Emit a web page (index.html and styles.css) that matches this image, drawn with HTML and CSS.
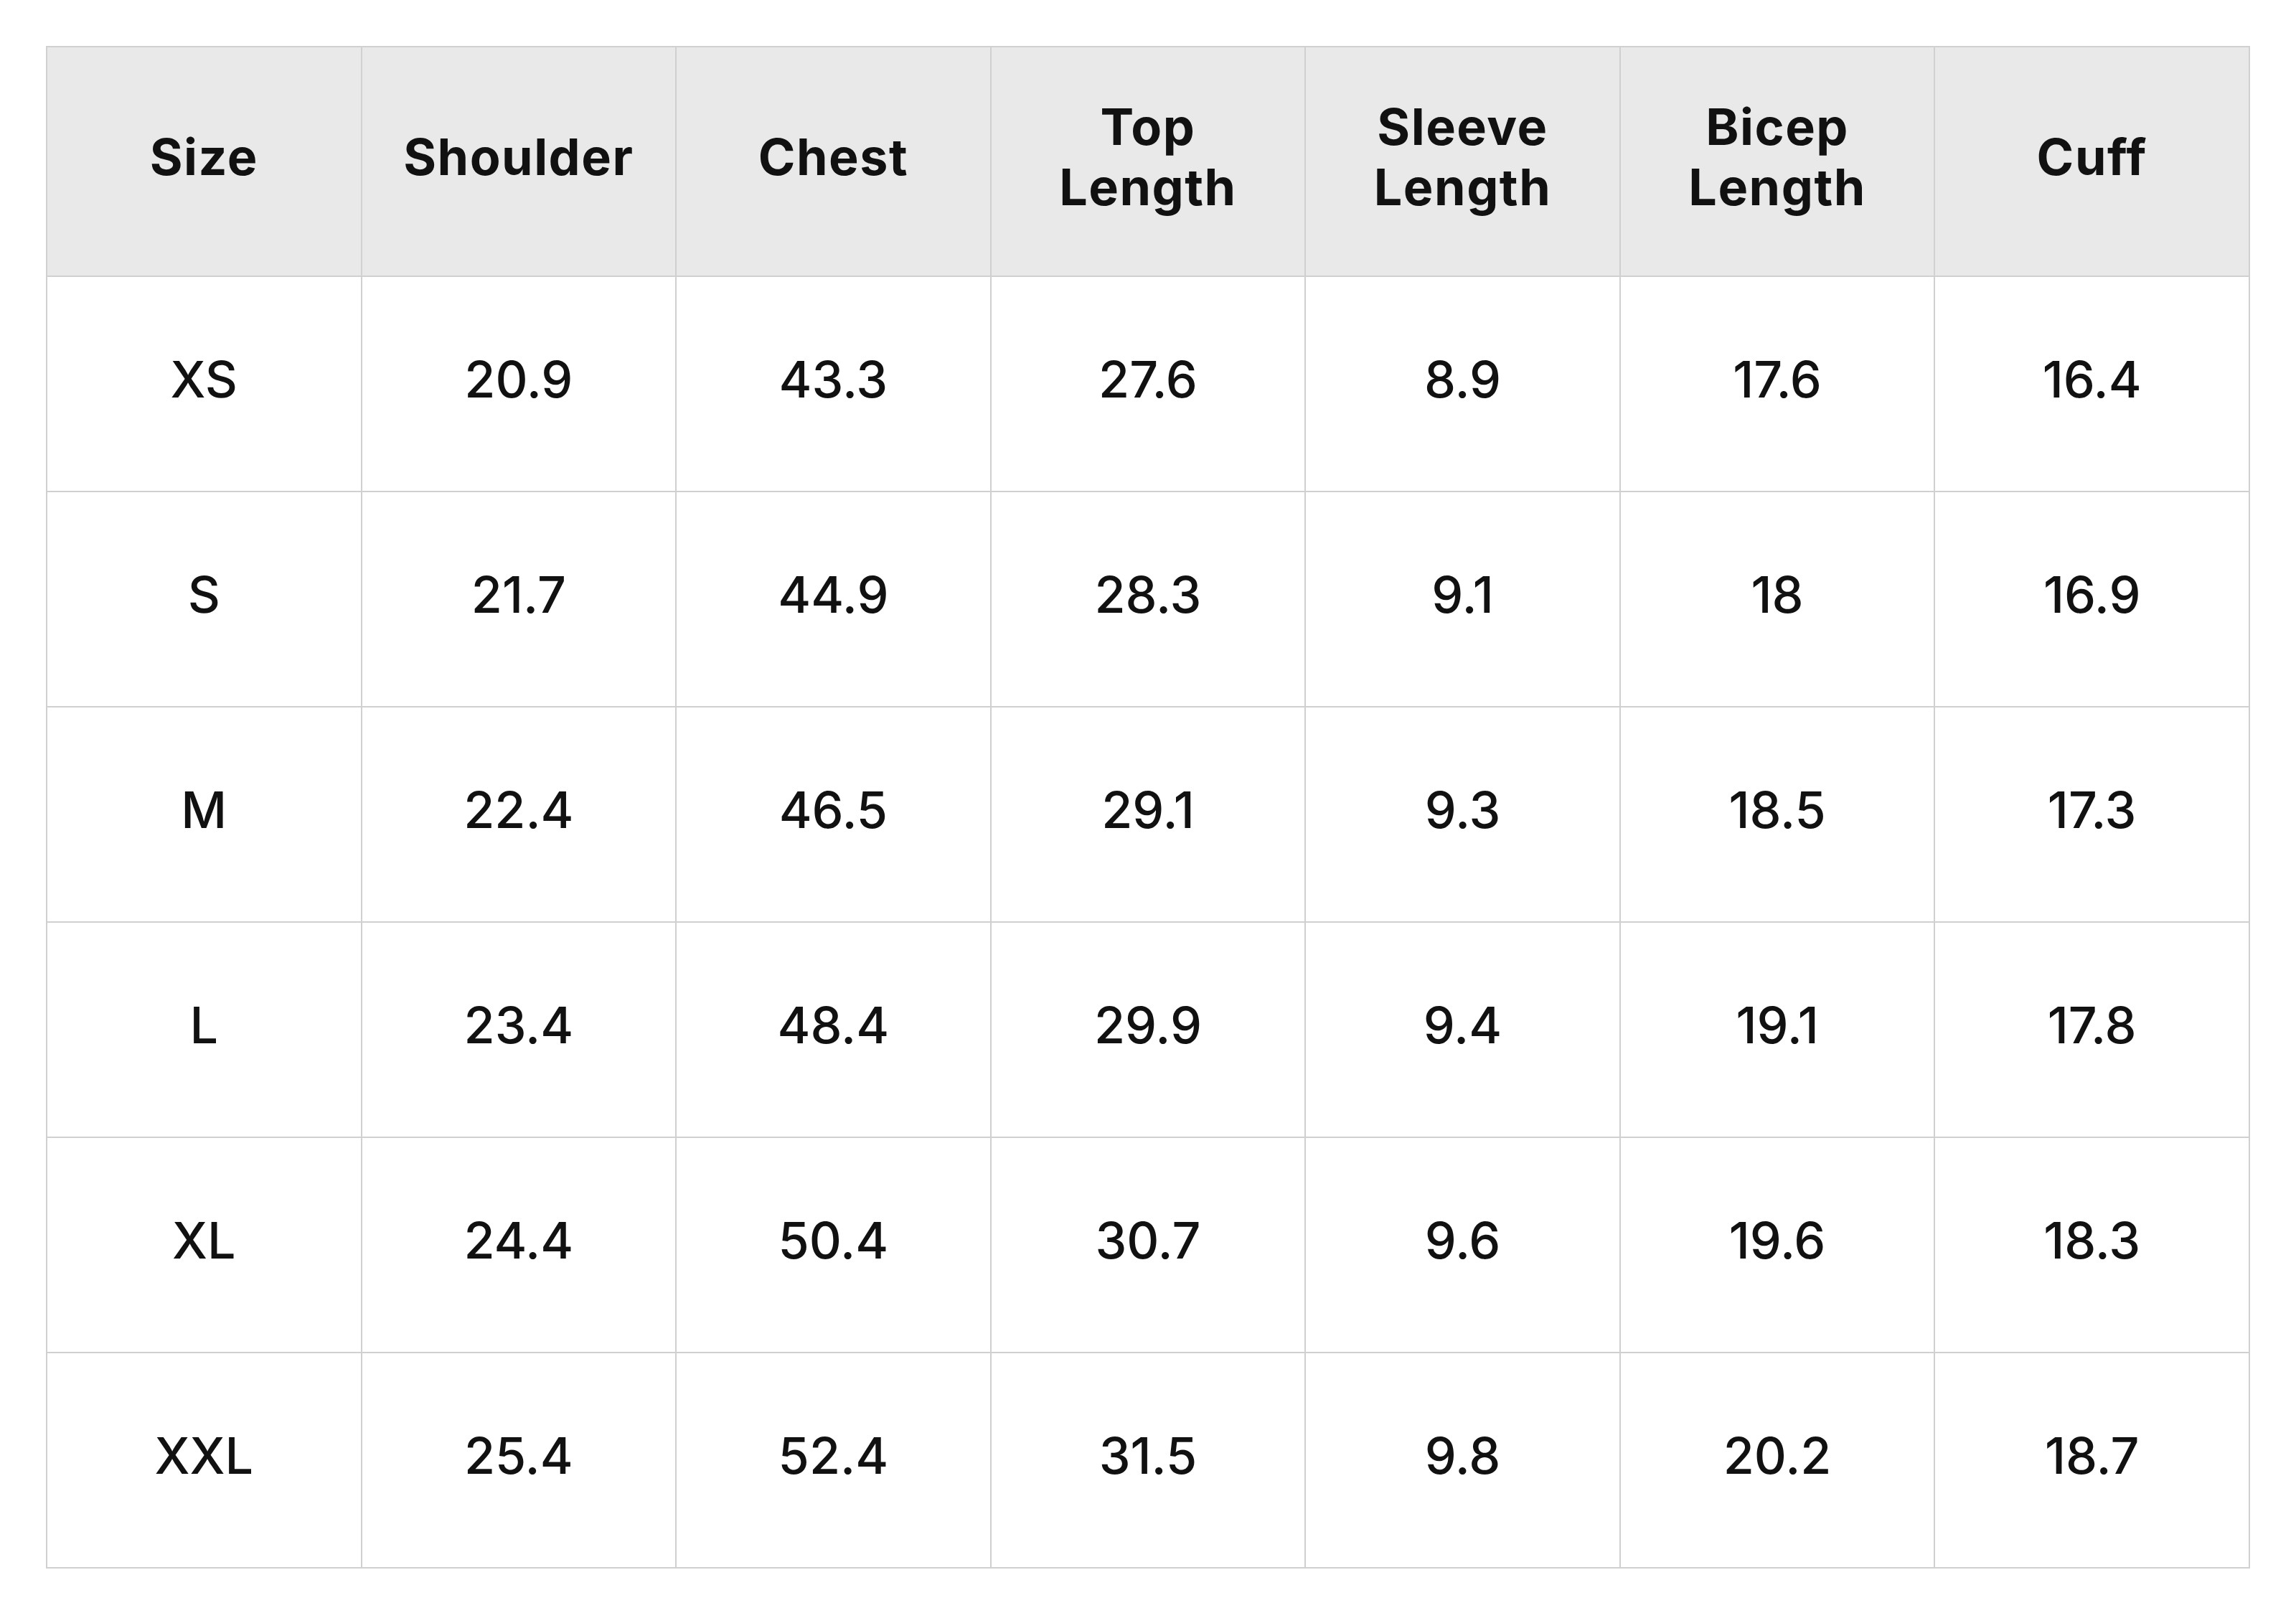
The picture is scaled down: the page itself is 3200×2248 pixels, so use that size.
FILE: index.html
```html
<!DOCTYPE html>
<html lang="en">
<head>
<meta charset="utf-8">
<title>Size Chart</title>
<link rel="stylesheet" href="styles.css">
</head>
<body>
<table class="size-table">
  <thead>
    <tr>
      <th>Size</th>
      <th>Shoulder</th>
      <th>Chest</th>
      <th>Top<br>Length</th>
      <th>Sleeve<br>Length</th>
      <th>Bicep<br>Length</th>
      <th>Cuff</th>
    </tr>
  </thead>
  <tbody>
    <tr><td>XS</td><td>20.9</td><td>43.3</td><td>27.6</td><td>8.9</td><td>17.6</td><td>16.4</td></tr>
    <tr><td>S</td><td>21.7</td><td>44.9</td><td>28.3</td><td>9.1</td><td>18</td><td>16.9</td></tr>
    <tr><td>M</td><td>22.4</td><td>46.5</td><td>29.1</td><td>9.3</td><td>18.5</td><td>17.3</td></tr>
    <tr><td>L</td><td>23.4</td><td>48.4</td><td>29.9</td><td>9.4</td><td>19.1</td><td>17.8</td></tr>
    <tr><td>XL</td><td>24.4</td><td>50.4</td><td>30.7</td><td>9.6</td><td>19.6</td><td>18.3</td></tr>
    <tr><td>XXL</td><td>25.4</td><td>52.4</td><td>31.5</td><td>9.8</td><td>20.2</td><td>18.7</td></tr>
  </tbody>
</table>
</body>
</html>
```

FILE: styles.css
```css
html, body {
  background: #ffffff;
}
body {
  margin: 64px;
  font-family: Inter, "Liberation Sans", sans-serif;
  color: #111111;
}
.size-table {
  width: 3072px;
  border-collapse: collapse;
  table-layout: fixed;
}
.size-table th,
.size-table td {
  border: 2px solid #d0d0d0;
  text-align: center;
  vertical-align: middle;
  font-size: 70px;
  line-height: 84px;
  padding: 0 0 12px 0;
}
.size-table th {
  background: #e9e9e9;
  font-weight: 700;
  letter-spacing: 1.5px;
  height: 306px;
}
.size-table td {
  font-weight: 500;
  height: 286px;
}
```
